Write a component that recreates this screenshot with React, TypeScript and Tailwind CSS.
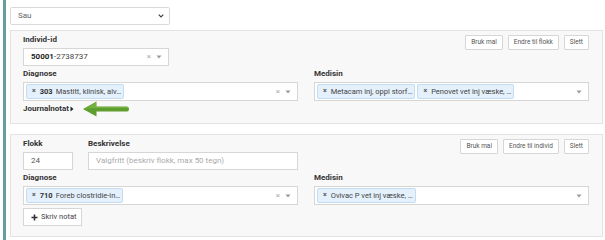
import React from "react";

const Label = ({ children }: { children: React.ReactNode }) => (
  <div className="h-[10px] leading-[10px] text-[8px] font-bold text-[#333]">{children}</div>
);

const Chip = ({ code, text }: { code?: string; text: string }) => (
  <span className="flex items-center h-[15px] pl-[5px] pr-[2px] bg-[#e4f0fb] border border-[#c5dcf0] rounded-[2px] text-[7.5px] text-[#444] whitespace-nowrap">
    <span className="text-[7px] font-bold text-[#555] mr-[4px]">×</span>
    {code && <span className="font-bold text-[#333] mr-[3px]">{code}</span>}
    <span>{text}</span>
  </span>
);

const Caret = () => (
  <svg width="6" height="4" viewBox="0 0 6 4" className="ml-[5px]">
    <path d="M0.5 0.5 L5.5 0.5 L3 3.5 Z" fill="#999" />
  </svg>
);

const Clear = () => <span className="text-[8px] text-[#aaa] leading-none">×</span>;

const Btn = ({ children }: { children: React.ReactNode }) => (
  <div className="h-[15px] px-[5px] flex items-center border border-[#d6d6d6] bg-white rounded-[1px] text-[6.5px] text-[#555] whitespace-nowrap">
    {children}
  </div>
);

export default function App() {
  return (
    <div className="w-[605px] h-[240px] bg-white flex font-['Roboto','Liberation_Sans',sans-serif] relative overflow-hidden">
      <div className="ml-[3px] w-[3px] h-full bg-[#649e9f]" />
      <div className="ml-[4px] w-[593px] pt-[7px]">
        {/* Sau select */}
        <div className="w-[160px] h-[18px] border border-[#d9d9d9] rounded-[2px] bg-white flex items-center pl-[7px] pr-[5px]">
          <span className="flex-1 text-[8px] text-[#666]">Sau</span>
          <svg width="6" height="4" viewBox="0 0 6 4">
            <path d="M0.7 0.7 L3 3 L5.3 0.7" stroke="#444" strokeWidth="1.2" fill="none" />
          </svg>
        </div>

        {/* Panel 1 */}
        <div className="mt-[5px] h-[94px] border border-[#e3e3e3] bg-[#f8f8f8] pl-[12px] pr-[13px] pt-[4px]">
          <div className="grid grid-cols-[275px_275px] gap-x-[16px]">
            <div className="flex flex-col">
              <Label>Individ-id</Label>
              <div className="mt-[3px] w-[146px] h-[18px] border border-[#d6d6d6] bg-white flex items-center pl-[7px] pr-[6px]">
                <span className="flex-1 text-[8px] text-[#444]">
                  <span className="font-bold text-[#222]">50001</span>-2738737
                </span>
                <Clear />
                <Caret />
              </div>
            </div>
            <div className="flex justify-end gap-[5px]">
              <Btn>Bruk mal</Btn>
              <Btn>Endre til flokk</Btn>
              <Btn>Slett</Btn>
            </div>
            <div className="flex flex-col mt-[3px]">
              <Label>Diagnose</Label>
              <div className="mt-[3px] h-[19px] border border-[#d6d6d6] bg-white flex items-center pl-[2px] pr-[6px]">
                <div className="flex-1 flex">
                  <Chip code="303" text="Mastitt, klinisk, alv…" />
                </div>
                <Clear />
                <Caret />
              </div>
            </div>
            <div className="flex flex-col mt-[3px]">
              <Label>Medisin</Label>
              <div className="mt-[3px] h-[19px] border border-[#d6d6d6] bg-white flex items-center pl-[2px] pr-[6px]">
                <div className="flex-1 flex gap-[2px]">
                  <Chip text="Metacam inj, oppl storf…" />
                  <Chip text="Penovet vet inj væske, …" />
                </div>
                <Caret />
              </div>
            </div>
          </div>
          <div className="mt-[3px] flex items-center h-[10px] text-[8px] font-bold text-[#333]">
            Journalnotat
            <svg width="4" height="6" viewBox="0 0 4 6" className="ml-[1px]">
              <path d="M0.5 0.5 L3.5 3 L0.5 5.5 Z" fill="#222" />
            </svg>
          </div>
        </div>

        {/* Panel 2 */}
        <div className="mt-[10px] h-[103px] border border-[#e3e3e3] bg-[#f8f8f8] pl-[12px] pr-[13px] pt-[4px]">
          <div className="grid grid-cols-[275px_275px] gap-x-[16px]">
            <div className="flex gap-[15px]">
              <div className="flex flex-col w-[50px]">
                <Label>Flokk</Label>
                <div className="mt-[3px] h-[18px] border border-[#d6d6d6] bg-white flex items-center pl-[7px] text-[8px] text-[#555]">
                  24
                </div>
              </div>
              <div className="flex flex-col flex-1">
                <Label>Beskrivelse</Label>
                <div className="mt-[3px] h-[18px] border border-[#d6d6d6] bg-white flex items-center pl-[7px] text-[8px] text-[#aaa] whitespace-nowrap">
                  Valgfritt (beskriv flokk, max 50 tegn)
                </div>
              </div>
            </div>
            <div className="flex justify-end gap-[5px]">
              <Btn>Bruk mal</Btn>
              <Btn>Endre til individ</Btn>
              <Btn>Slett</Btn>
            </div>
            <div className="flex flex-col mt-[3px]">
              <Label>Diagnose</Label>
              <div className="mt-[3px] h-[19px] border border-[#d6d6d6] bg-white flex items-center pl-[2px] pr-[6px]">
                <div className="flex-1 flex">
                  <Chip code="710" text="Foreb clostridie-in…" />
                </div>
                <Clear />
                <Caret />
              </div>
            </div>
            <div className="flex flex-col mt-[3px]">
              <Label>Medisin</Label>
              <div className="mt-[3px] h-[19px] border border-[#d6d6d6] bg-white flex items-center pl-[2px] pr-[6px]">
                <div className="flex-1 flex">
                  <Chip text="Ovivac P vet inj væske, …" />
                </div>
                <Caret />
              </div>
            </div>
          </div>
          <div className="mt-[3px] w-[59px] h-[18px] border border-[#d6d6d6] bg-white flex items-center pl-[7px] text-[7.5px] text-[#444] whitespace-nowrap">
            <svg width="7" height="7" viewBox="0 0 7 7" className="mr-[3px]">
              <path d="M3.5 0.5 V6.5 M0.5 3.5 H6.5" stroke="#333" strokeWidth="1.6" />
            </svg>
            Skriv notat
          </div>
        </div>
      </div>

      {/* Green annotation arrow */}
      <svg width="48" height="18" viewBox="0 0 48 18" className="absolute left-[82px] top-[100px]">
        <path
          d="M1 9 L14.5 1.5 L14.5 6.5 L45 6.5 Q47 6.5 47 9 Q47 11.5 45 11.5 L14.5 11.5 L14.5 16.5 Z"
          fill="#5e9e2e"
        />
        <path d="M2.5 8.5 L14 2.5 L14 7 L45 7 Q46 7 46.3 8 L14 8 Z" fill="#7fb94a" opacity="0.7" />
      </svg>
    </div>
  );
}
